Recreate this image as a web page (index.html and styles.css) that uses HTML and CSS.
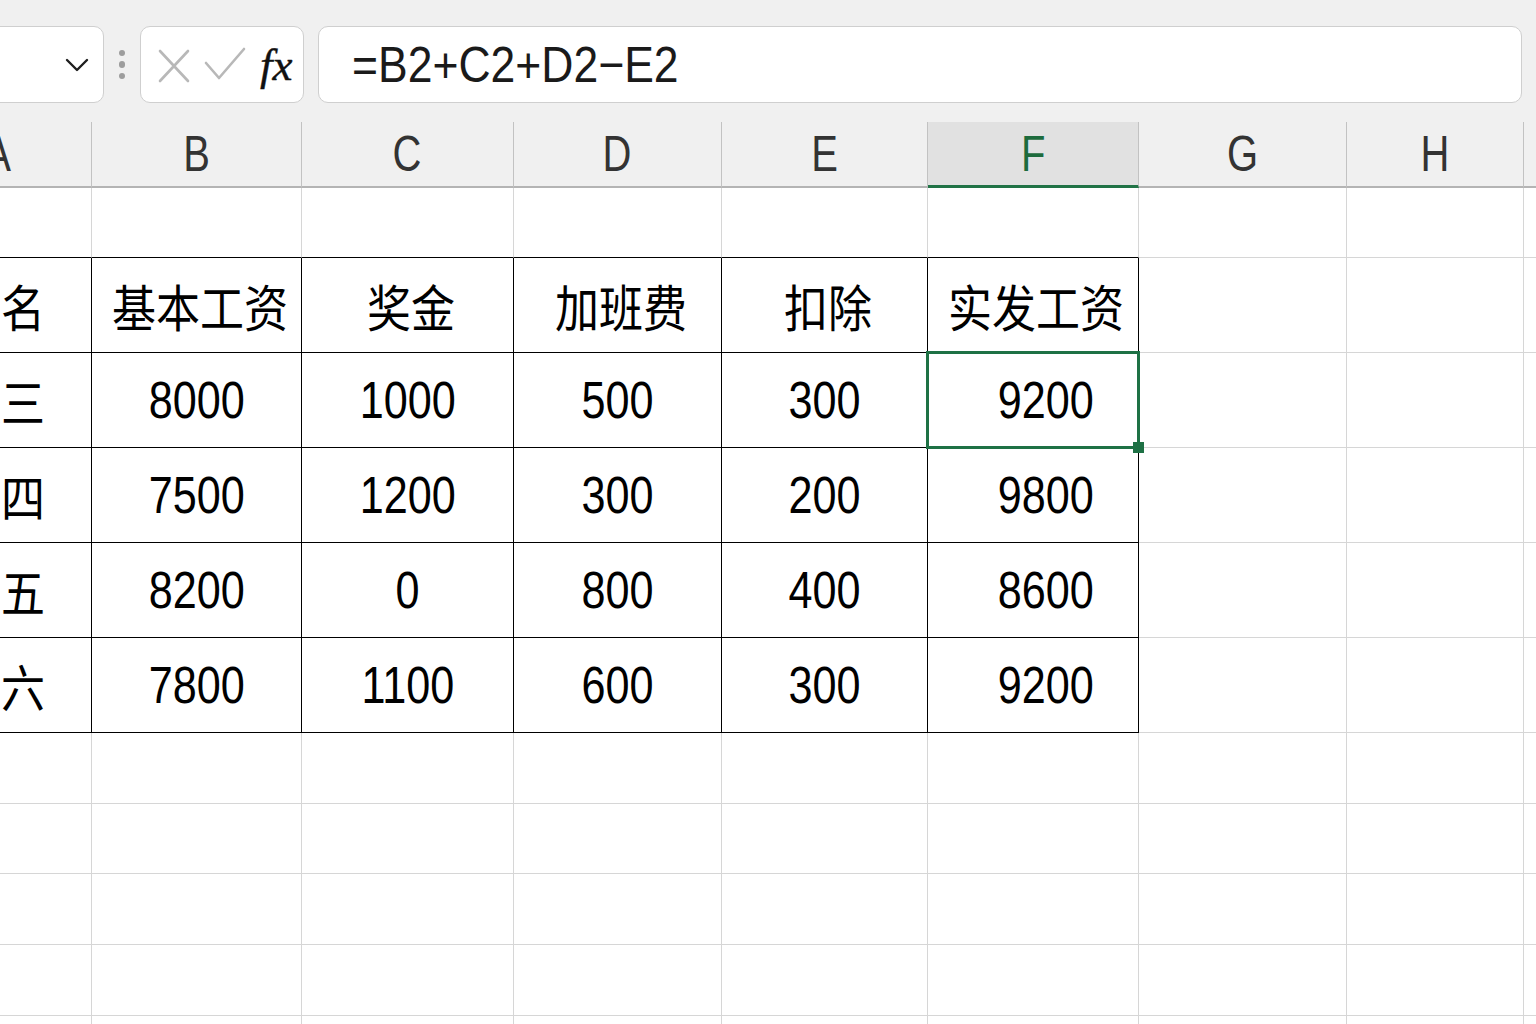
FILE: index.html
```html
<!DOCTYPE html>
<html lang="zh-CN">
<head>
<meta charset="utf-8">
<title>工资表</title>
<link rel="stylesheet" href="styles.css">
</head>
<body>
<div class="app">
  <div class="toolbar">
    <div class="namebox">
      <svg class="chev" viewBox="0 0 24 14" width="24" height="14"><path d="M2 2 L12 12 L22 2" fill="none" stroke="#1f1f1f" stroke-width="2.4" stroke-linecap="round" stroke-linejoin="round"/></svg>
    </div>
    <div class="grip"><span></span><span></span><span></span></div>
    <div class="fxbtns">
      <svg class="ico-x" viewBox="0 0 32 34" width="32" height="34"><path d="M2 2 L30 32 M30 2 L2 32" fill="none" stroke="#b8b8b8" stroke-width="2.6" stroke-linecap="round"/></svg>
      <svg class="ico-ok" viewBox="0 0 42 34" width="42" height="34"><path d="M2 16 L15 31 L40 2" fill="none" stroke="#b8b8b8" stroke-width="2.6" stroke-linecap="round" stroke-linejoin="round"/></svg>
      <span class="fx">fx</span>
    </div>
    <div class="formula"><span class="ftext">=B2+C2+D2−E2</span></div>
  </div>

  <div class="sheet">
    <div class="row hdr">
      <div class="c"><span class="l">A</span></div><div class="c"><span class="l">B</span></div><div class="c"><span class="l">C</span></div><div class="c"><span class="l">D</span></div><div class="c"><span class="l">E</span></div><div class="c sel"><span class="l">F</span></div><div class="c"><span class="l">G</span></div><div class="c"><span class="l">H</span></div><div class="c"></div>
    </div>
    <div class="row r-sm">
      <div class="c tb"></div><div class="c tb"></div><div class="c tb"></div><div class="c tb"></div><div class="c tb"></div><div class="c tb"></div><div class="c"></div><div class="c"></div><div class="c"></div>
    </div>
    <div class="row r-lg">
      <div class="c t"><span class="z">姓名</span></div><div class="c t"><span class="z">基本工资</span></div><div class="c t"><span class="z">奖金</span></div><div class="c t"><span class="z">加班费</span></div><div class="c t"><span class="z">扣除</span></div><div class="c t"><span class="z">实发工资</span></div><div class="c"></div><div class="c"></div><div class="c"></div>
    </div>
    <div class="row r-lg">
      <div class="c t"><span class="z">张三</span></div><div class="c t"><span class="n">8000</span></div><div class="c t"><span class="n">1000</span></div><div class="c t"><span class="n">500</span></div><div class="c t"><span class="n">300</span></div><div class="c t tot active"><span class="n">9200</span><span class="handle"></span></div><div class="c"></div><div class="c"></div><div class="c"></div>
    </div>
    <div class="row r-lg">
      <div class="c t"><span class="z">李四</span></div><div class="c t"><span class="n">7500</span></div><div class="c t"><span class="n">1200</span></div><div class="c t"><span class="n">300</span></div><div class="c t"><span class="n">200</span></div><div class="c t tot"><span class="n">9800</span></div><div class="c"></div><div class="c"></div><div class="c"></div>
    </div>
    <div class="row r-lg">
      <div class="c t"><span class="z">王五</span></div><div class="c t"><span class="n">8200</span></div><div class="c t"><span class="n">0</span></div><div class="c t"><span class="n">800</span></div><div class="c t"><span class="n">400</span></div><div class="c t tot"><span class="n">8600</span></div><div class="c"></div><div class="c"></div><div class="c"></div>
    </div>
    <div class="row r-lg">
      <div class="c t"><span class="z">赵六</span></div><div class="c t"><span class="n">7800</span></div><div class="c t"><span class="n">1100</span></div><div class="c t"><span class="n">600</span></div><div class="c t"><span class="n">300</span></div><div class="c t tot"><span class="n">9200</span></div><div class="c"></div><div class="c"></div><div class="c"></div>
    </div>
    <div class="row r-sm2">
      <div class="c"></div><div class="c"></div><div class="c"></div><div class="c"></div><div class="c"></div><div class="c"></div><div class="c"></div><div class="c"></div><div class="c"></div>
    </div>
    <div class="row r-sm">
      <div class="c"></div><div class="c"></div><div class="c"></div><div class="c"></div><div class="c"></div><div class="c"></div><div class="c"></div><div class="c"></div><div class="c"></div>
    </div>
    <div class="row r-sm2">
      <div class="c"></div><div class="c"></div><div class="c"></div><div class="c"></div><div class="c"></div><div class="c"></div><div class="c"></div><div class="c"></div><div class="c"></div>
    </div>
    <div class="row r-sm2">
      <div class="c"></div><div class="c"></div><div class="c"></div><div class="c"></div><div class="c"></div><div class="c"></div><div class="c"></div><div class="c"></div><div class="c"></div>
    </div>
    <div class="row r-sm2">
      <div class="c"></div><div class="c"></div><div class="c"></div><div class="c"></div><div class="c"></div><div class="c"></div><div class="c"></div><div class="c"></div><div class="c"></div>
    </div>
  </div>
</div>
</body>
</html>
```

FILE: styles.css
```css
* { box-sizing: border-box; }

html, body {
  margin: 0;
  padding: 0;
  width: 1536px;
  height: 1024px;
  overflow: hidden;
  background: #ffffff;
}

.app {
  width: 1536px;
  height: 1024px;
  overflow: hidden;
  background: #f0f0f0;
  font-family: "Liberation Sans", "Noto Sans CJK SC", sans-serif;
}

/* ---------- toolbar ---------- */
.toolbar {
  display: flex;
  align-items: center;
  height: 122px;
  padding: 26px 14px 19px 0;
}

.namebox {
  flex: 0 0 200px;
  margin-left: -96px;
  height: 77px;
  background: #ffffff;
  border: 1.5px solid #cfcfcf;
  border-radius: 10px;
  display: flex;
  align-items: center;
  justify-content: flex-end;
  padding-right: 14px;
}

.grip {
  flex: 0 0 36px;
  display: flex;
  flex-direction: column;
  align-items: center;
  gap: 5px;
}
.grip span {
  width: 6.5px;
  height: 6.5px;
  border-radius: 50%;
  background: #9d9d9d;
}

.fxbtns {
  flex: 0 0 164px;
  height: 77px;
  background: #ffffff;
  border: 1.5px solid #cfcfcf;
  border-radius: 10px;
  display: flex;
  align-items: center;
  padding-left: 17px;
}
.ico-x { margin-top: 2px; }
.ico-ok { margin-left: 14px; margin-top: -2px; }
.fx {
  margin-left: 14px;
  font-family: "Liberation Serif", serif;
  font-style: italic;
  font-size: 45px;
  color: #111111;
  line-height: 1;
  margin-top: 2px;
  -webkit-text-stroke: 0.4px #111111;
}

.formula {
  flex: 1;
  margin-left: 14px;
  height: 77px;
  background: #ffffff;
  border: 1.5px solid #cfcfcf;
  border-radius: 10px;
  display: flex;
  align-items: center;
  padding-left: 33px;
  font-size: 50px;
  color: #1a1a1a;
  line-height: 1;
}
.ftext {
  display: inline-block;
  transform: scaleX(0.89);
  transform-origin: left center;
  white-space: nowrap;
}

/* ---------- sheet ---------- */
.sheet {
  margin-left: -95px;
  background: #ffffff;
}

.row {
  display: grid;
  grid-template-columns: 187px 210px 212px 208px 206px 211px 208px 177px 200px;
}

.c {
  border-right: 1px solid #d6d6d6;
  border-bottom: 1px solid #d6d6d6;
  display: flex;
  align-items: center;
  justify-content: center;
  position: relative;
  color: #000000;
  line-height: 1;
}

.hdr { height: 66px; background: #f0f0f0; }
.hdr .c {
  border-right: 1px solid #c2c2c2;
  border-bottom: 2px solid #b4b4b4;
  font-size: 50px;
  color: #333333;
}
.hdr .c.sel {
  background: #e1e1e1;
  color: #1d6b3d;
  border-bottom: 3px solid #217346;
  padding-top: 1px;
}
.l {
  display: inline-block;
  transform: scaleX(0.8);
}

.r-sm { height: 70px; }
.r-sm2 { height: 71px; }
.r-lg { height: 95px; }

.c.tb { border-bottom-color: #000000; }
.c.t {
  border-right-color: #000000;
  border-bottom-color: #000000;
}

.z {
  display: inline-block;
  font-family: "Noto Sans CJK SC", sans-serif;
  font-size: 50px;
  transform: scaleX(0.88);
  white-space: nowrap;
  margin-left: 6px;
}

.n {
  display: inline-block;
  font-size: 52px;
  transform: scaleX(0.83);
  white-space: nowrap;
}

.tot {
  justify-content: flex-end;
  padding-right: 44px;
}
.tot .n { transform-origin: right center; }

.active { z-index: 3; }
.active::after {
  content: "";
  position: absolute;
  top: -2px;
  left: -2px;
  right: -2px;
  bottom: -2px;
  border: 3px solid #1e7145;
  pointer-events: none;
}
.handle {
  position: absolute;
  right: -6px;
  bottom: -6px;
  width: 11px;
  height: 11px;
  background: #1e7145;
  z-index: 2;
}
```
